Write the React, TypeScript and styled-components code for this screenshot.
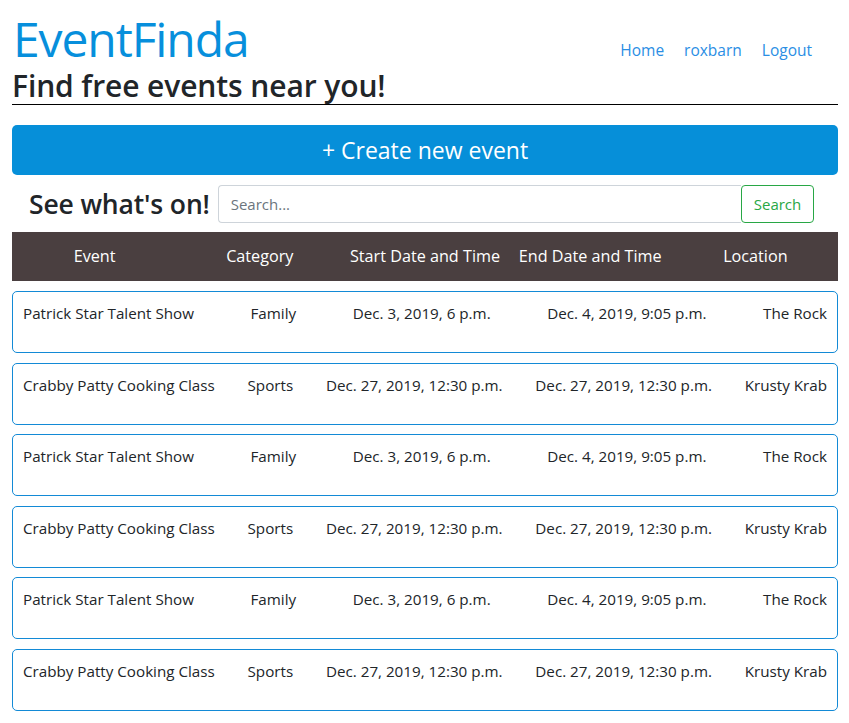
import React from "react";
import styled, { createGlobalStyle } from "styled-components";

const GlobalStyle = createGlobalStyle`
  html, body { margin: 0; padding: 0; background: #fff; }
  body {
    font-family: "Open Sans", "Noto Sans", sans-serif;
    color: #212529;
    font-size: 16px;
    line-height: 1.5;
  }
  * { box-sizing: border-box; }
`;

const Page = styled.div`
  padding: 0 11px 12px 12px;
`;

const Header = styled.header`
  border-bottom: 1px solid #000;
  padding-top: 11px;
`;

const TopRow = styled.div`
  display: flex;
  align-items: center;
  justify-content: space-between;
`;

const Brand = styled.h1`
  margin: 0;
  font-size: 48px;
  font-weight: 400;
  line-height: 56px;
  color: #078fdc;
  padding-left: 1px;
  letter-spacing: -1.1px;
`;

const Nav = styled.nav`
  display: flex;
  gap: 20px;
  padding-right: 26px;
  padding-top: 23px;
`;

const NavLink = styled.a`
  color: #2a8ee4;
  text-decoration: none;
  font-size: 15.5px;
`;

const Tagline = styled.h2`
  margin: 0;
  font-size: 30px;
  font-weight: 600;
  line-height: 37px;
  letter-spacing: -0.1px;
`;

const CreateButton = styled.button`
  display: block;
  width: 100%;
  margin-top: 20px;
  height: 50px;
  border: none;
  border-radius: 5px;
  background: #068fd9;
  color: #fff;
  font-family: inherit;
  font-size: 23px;
  cursor: pointer;
`;

const SearchRow = styled.form`
  display: flex;
  align-items: center;
  margin-top: 10px;
  padding: 0 24px 0 17px;
`;

const SearchTitle = styled.h3`
  margin: 0 8px 0 0;
  font-size: 26.5px;
  font-weight: 600;
  line-height: 38px;
  letter-spacing: -0.15px;
  white-space: nowrap;
`;

const SearchInput = styled.input`
  flex: 1;
  height: 38px;
  border: 1px solid #ced4da;
  border-right: none;
  border-radius: 4px 0 0 4px;
  padding: 0 12px;
  font-family: inherit;
  font-size: 15px;
  color: #495057;
  &::placeholder { color: #6c757d; }
`;

const SearchButton = styled.button`
  height: 38px;
  width: 73px;
  border: 1px solid #28a745;
  border-radius: 4px;
  background: #fff;
  color: #28a745;
  font-family: inherit;
  font-size: 15px;
`;

const TableHead = styled.div`
  display: grid;
  grid-template-columns: repeat(5, 1fr);
  align-items: center;
  height: 49px;
  margin-top: 9px;
  background: #4a3f40;
  color: #fff;
  font-size: 16.2px;
  text-align: center;
`;

const List = styled.div`
  margin-top: 10px;
  display: flex;
  flex-direction: column;
  gap: 9.6px;
`;

const Card = styled.div`
  border: 1px solid #138ad6;
  border-radius: 5px;
  padding: 9px 10px 27px;
  display: flex;
  justify-content: space-between;
  line-height: 24px;
  font-size: 15.2px;
`;

const Cell = styled.span`
  white-space: nowrap;
`;

type EventItem = { name: string; category: string; start: string; end: string; location: string };

const a: EventItem = {
  name: "Patrick Star Talent Show",
  category: "Family",
  start: "Dec. 3, 2019, 6 p.m.",
  end: "Dec. 4, 2019, 9:05 p.m.",
  location: "The Rock",
};
const b: EventItem = {
  name: "Crabby Patty Cooking Class",
  category: "Sports",
  start: "Dec. 27, 2019, 12:30 p.m.",
  end: "Dec. 27, 2019, 12:30 p.m.",
  location: "Krusty Krab",
};
const events = [a, b, a, b, a, b];

export default function App() {
  return (
    <Page>
      <GlobalStyle />
      <Header>
        <TopRow>
          <Brand>EventFinda</Brand>
          <Nav>
            <NavLink href="#">Home</NavLink>
            <NavLink href="#">roxbarn</NavLink>
            <NavLink href="#">Logout</NavLink>
          </Nav>
        </TopRow>
        <Tagline>Find free events near you!</Tagline>
      </Header>
      <CreateButton type="button">+ Create new event</CreateButton>
      <SearchRow onSubmit={(e) => e.preventDefault()}>
        <SearchTitle>See what's on!</SearchTitle>
        <SearchInput placeholder="Search..." />
        <SearchButton type="submit">Search</SearchButton>
      </SearchRow>
      <TableHead>
        <span>Event</span>
        <span>Category</span>
        <span>Start Date and Time</span>
        <span>End Date and Time</span>
        <span>Location</span>
      </TableHead>
      <List>
        {events.map((ev, i) => (
          <Card key={i}>
            <Cell>{ev.name}</Cell>
            <Cell>{ev.category}</Cell>
            <Cell>{ev.start}</Cell>
            <Cell>{ev.end}</Cell>
            <Cell>{ev.location}</Cell>
          </Card>
        ))}
      </List>
    </Page>
  );
}
